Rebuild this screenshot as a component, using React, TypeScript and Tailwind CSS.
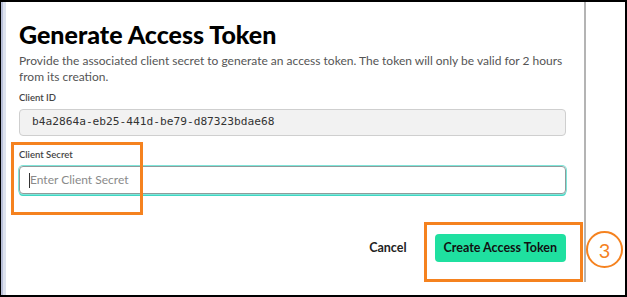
import React from "react";

const font = { fontFamily: "Lato, 'Open Sans', sans-serif" };

export default function App() {
  return (
    <div
      className="relative w-[627px] h-[297px] overflow-hidden border-t-2 border-l border-r-2 border-b-2 border-black bg-white flex"
      style={font}
    >
      {/* left window edge */}
      <div className="w-[2px] bg-[#b9c0d8]" />
      <div className="w-[3px] bg-[#dde2ee]" />

      {/* dialog */}
      <div className="w-[580px] h-[280px] border-r-2 border-[#b4b4b4] pl-[13px] pr-[18px] pt-[17px] flex flex-col">
        <h1 className="text-[25px] leading-[30px] font-black text-black">Generate Access Token</h1>
        <p className="mt-[4px] text-[12px] leading-[16px] text-[#555]">
          Provide the associated client secret to generate an access token. The token will only be valid for 2 hours
          from its creation.
        </p>

        <label className="mt-[7px] text-[9.5px] leading-[12px] font-semibold text-[#444]">Client ID</label>
        <div className="mt-[5px] h-[27px] rounded-[4px] border border-[#cfcfcf] bg-[#f2f2f2] flex items-center pl-[12px]">
          <span className="text-[11.2px] text-[#333]" style={{ fontFamily: "'DejaVu Sans Mono', monospace" }}>
            b4a2864a-eb25-441d-be79-d87323bdae68
          </span>
        </div>

        <label className="mt-[13px] text-[9.5px] leading-[12px] font-semibold text-[#444]">Client Secret</label>
        <div className="mt-[5px] h-[28px] rounded-[4px] border border-[#8f9a9a] shadow-[0_0_0_1px_#7fe6da,0_2px_0_0_#3fd6c2] flex items-center pl-[9px]">
          <span className="w-px h-[15px] bg-[#333]" />
          <span className="text-[12px] text-[#8a8a8a]">Enter Client Secret</span>
        </div>

        <div className="mt-auto mb-[20px] flex items-center justify-end gap-[28px]">
          <span className="text-[12.5px] font-bold text-[#222]">Cancel</span>
          <span className="h-[28px] px-[9px] rounded-[4px] bg-[#1fe0a0] flex items-center text-[12.5px] font-bold text-[#111]">
            Create Access Token
          </span>
        </div>
      </div>

      {/* annotations */}
      <div className="absolute left-[10px] top-[140px] w-[132px] h-[73px] border-[3px] border-[#f5821f]" />
      <div className="absolute left-[423px] top-[220px] w-[159px] h-[60px] border-[3px] border-[#f5821f]" />
      <div className="absolute left-[585px] top-[229px] w-[37px] h-[37px] rounded-full border-[2.5px] border-[#f5821f] bg-white flex items-center justify-center text-[20px] text-[#f5821f]">
        3
      </div>
    </div>
  );
}
